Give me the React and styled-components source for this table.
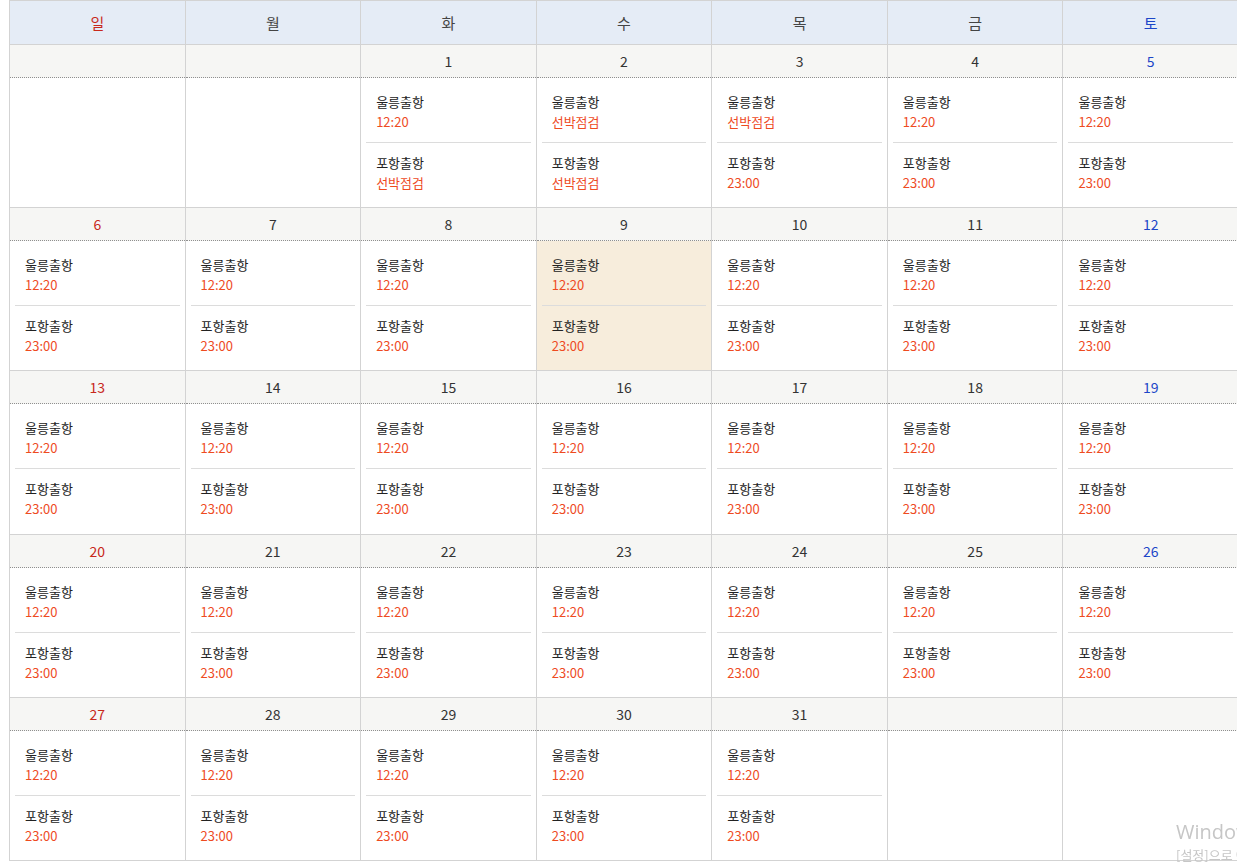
import React from "react";
import styled, { createGlobalStyle } from "styled-components";

const GlobalStyle = createGlobalStyle`
  html, body {
    margin: 0;
    padding: 0;
    overflow: hidden;
    background: #fff;
  }
  body {
    padding-left: 9px;
    font-family: "Noto Sans CJK KR", "Noto Sans", sans-serif;
  }
`;

const Calendar = styled.div`
  width: 1229px;
  border-top: 1px solid #d3d3d3;
  border-left: 1px solid #d3d3d3;
`;

const Week = styled.div`
  display: grid;
  grid-template-columns: repeat(7, 1fr);
`;

const HeadCell = styled.div`
  height: 43px;
  display: flex;
  align-items: center;
  justify-content: center;
  background: #e5ecf6;
  border-right: 1px solid #d3d3d3;
  border-bottom: 1px solid #d3d3d3;
  font-size: 15px;
  color: ${({ tone }) => tone};
`;

const Day = styled.div`
  display: flex;
  flex-direction: column;
  border-right: 1px solid #d3d3d3;
  border-bottom: 1px solid #d3d3d3;
`;

const DateBar = styled.div`
  height: 32px;
  display: flex;
  align-items: center;
  justify-content: center;
  background: #f6f6f4;
  border-bottom: 1px dotted #8f8f8f;
  font-size: 14px;
  color: ${({ tone }) => tone};
`;

const Body = styled.div`
  height: 129.2px;
  box-sizing: border-box;
  padding: 4px 5px 0;
  background: ${({ today }) => (today ? "#f7eddc" : "#fff")};
`;

const Entry = styled.div`
  padding: 10px 10px;
  line-height: 20px;
  font-size: 13px;

  & + & {
    border-top: 1px solid #dcdcdc;
    padding-top: 10px;
  }
`;

const Port = styled.div`
  color: #222;
`;

const Time = styled.div`
  color: #ee4b1f;
`;

const Watermark = styled.div`
  position: fixed;
  left: 1176px;
  top: 818px;
  white-space: nowrap;
  color: #c6c6c6;
  font-family: "Open Sans", "Noto Sans CJK KR", sans-serif;
  pointer-events: none;
`;

const WmTitle = styled.div`
  font-size: 20px;
  line-height: 28px;
`;

const WmText = styled.div`
  font-size: 13px;
  line-height: 18px;
  font-family: "Noto Sans CJK KR", sans-serif;
`;

const days = ["일", "월", "화", "수", "목", "금", "토"];
const RED = "#c8281b";
const BLUE = "#1c46c8";
const DARK = "#333";

const toneFor = (col) => (col === 0 ? RED : col === 6 ? BLUE : DARK);

const CHECK = "선박점검";

const scheduleFor = (d) => {
  if (d === 1) return ["12:20", CHECK];
  if (d === 2) return [CHECK, CHECK];
  if (d === 3) return [CHECK, "23:00"];
  return ["12:20", "23:00"];
};

// 1일이 화요일에서 시작
const cells = [];
for (let i = 0; i < 2; i++) cells.push(null);
for (let d = 1; d <= 31; d++) cells.push(d);
while (cells.length % 7) cells.push(null);

const weeks = [];
for (let i = 0; i < cells.length; i += 7) weeks.push(cells.slice(i, i + 7));

const App = () => {
  return (
    <>
      <GlobalStyle />
      <Calendar>
        <Week>
          {days.map((name, i) => (
            <HeadCell key={name} tone={i === 0 ? RED : i === 6 ? BLUE : "#444"}>
              {name}
            </HeadCell>
          ))}
        </Week>
        {weeks.map((week, w) => (
          <Week key={w}>
            {week.map((d, col) => {
              const [ul, po] = d ? scheduleFor(d) : [];
              return (
                <Day key={col}>
                  <DateBar tone={toneFor(col)}>{d}</DateBar>
                  <Body today={d === 9}>
                    {d && (
                      <>
                        <Entry>
                          <Port>울릉출항</Port>
                          <Time>{ul}</Time>
                        </Entry>
                        <Entry>
                          <Port>포항출항</Port>
                          <Time>{po}</Time>
                        </Entry>
                      </>
                    )}
                  </Body>
                </Day>
              );
            })}
          </Week>
        ))}
      </Calendar>
      <Watermark>
        <WmTitle>Windows 정품 인증</WmTitle>
        <WmText>[설정]으로 이동하여 Windows를 정품 인증합니다.</WmText>
      </Watermark>
    </>
  );
};

export default App;
